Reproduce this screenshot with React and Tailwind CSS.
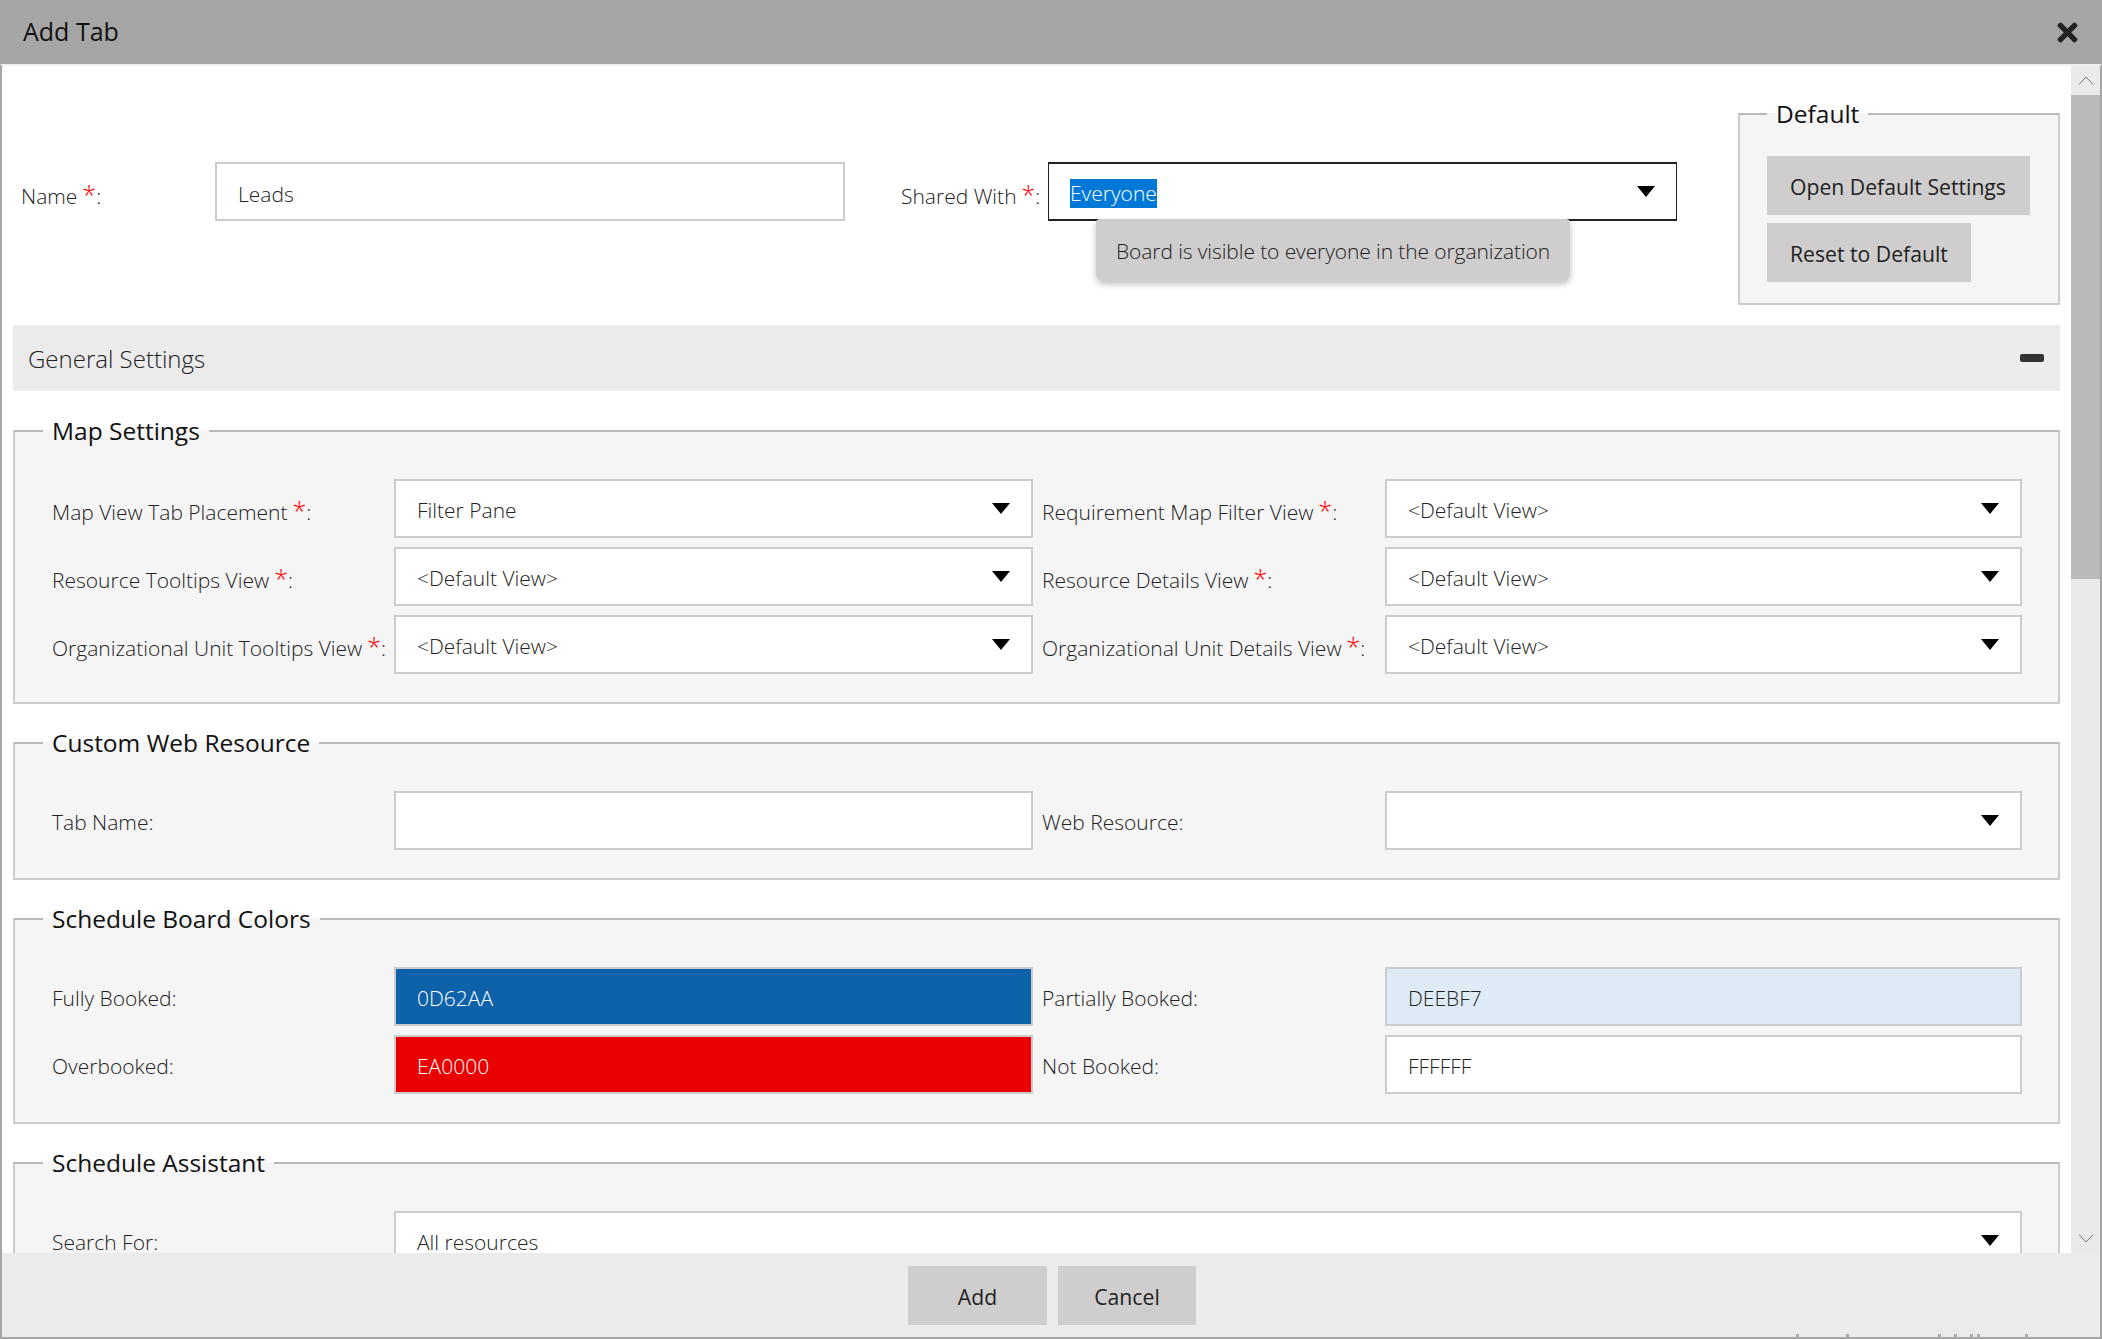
import React from "react";
import { FaTimes } from "react-icons/fa";

const font = "font-['Open_Sans',sans-serif]";

// bits of the page behind the dialog that peek out under the footer
const specks = [1796, 1846, 1938, 1954, 1970, 1977, 2025];

function Caret() {
  return (
    <svg className="absolute top-[22px] right-[21px]" width="18" height="11" viewBox="0 0 18 11">
      <path d="M0 0h18L9 11z" fill="#000" />
    </svg>
  );
}

function Field({ value, select, className = "", bg = "bg-white", textClass = "text-[#222]" }) {
  return (
    <div className={`relative flex h-[59px] items-center border-2 border-[#ccc] pt-[6px] pl-[21px] text-[21px] font-light ${bg} ${textClass} ${className}`}>
      {value}
      {select && <Caret />}
    </div>
  );
}

function Label({ text, required }) {
  return (
    <div className={`${required ? "pt-[8px]" : "pt-[3px]"} text-[21px] leading-[32px] font-light whitespace-nowrap text-[#222]`}>
      {text}
      {required && <span className="ml-[5px] text-[25px] leading-[0] text-[#f00]">*</span>}:
    </div>
  );
}

function Section({ title, className = "", children }) {
  return (
    <fieldset className={`border-2 border-[#ccc] border-t-[#b9b9b9] bg-[#f5f5f5] pb-[28.5px] pl-[37px] ${className}`}>
      <legend className="ml-[-9px] px-[9px] text-[24.5px] leading-[36px] text-[#111]">{title}</legend>
      <div className="mt-[29.5px] grid grid-cols-[342px_639px_352px_637px] items-center gap-y-[9px]">{children}</div>
    </fieldset>
  );
}

export default function App() {
  return (
    <div className={`relative flex h-[1339px] w-[2102px] flex-col overflow-hidden bg-white ${font}`}>
      <div className="flex h-[64px] shrink-0 items-center justify-between bg-[#a6a6a6] pr-[20px] pl-[23px]">
        <span className="text-[25px] text-[#111]">Add Tab</span>
        <FaTimes size={29} color="#222" />
      </div>

      <div className="flex min-h-0 flex-1 border-x-2 border-t-2 border-x-[#a6a6a6] border-t-[#f0f0f0]">
        <div className="min-w-0 flex-1 overflow-hidden px-[11px]">
          <div className="relative flex h-[259px] items-start">
            <div className="mt-[96px] flex items-center">
              <div className="w-[202px] pl-[8px]">
                <Label text="Name" required />
              </div>
              <Field value="Leads" className="w-[630px]" />
              <div className="w-[203px] pl-[56px]">
                <Label text="Shared With" required />
              </div>
              <div className="relative flex h-[59px] w-[629px] items-center border-x border-y-2 border-[#222] bg-white pt-[4px] pl-[21px] text-[21px] leading-[29px] font-light">
                <span className="bg-[#0078d7] text-white">Everyone</span>
                <Caret />
                <div className="absolute top-[55px] left-[47px] flex h-[62px] w-[474px] items-center rounded-t-sm rounded-b-lg bg-[#cfcdcd] pt-[3px] pl-[20px] tracking-[-0.1px] whitespace-nowrap text-[#222] shadow-[0_3px_6px_rgba(0,0,0,0.25)]">
                  Board is visible to everyone in the organization
                </div>
              </div>
            </div>
            <fieldset className="absolute top-[30px] right-0 h-[209px] w-[322px] border-2 border-[#ccc] border-t-[#b9b9b9] bg-[#f5f5f5] pl-[27px]">
              <legend className="px-[9px] text-[24.5px] leading-[36px] text-[#111]">Default</legend>
              <div className="mt-[24px] flex flex-col items-start gap-[8px]">
                <button className="h-[59px] w-[263px] bg-[#cfcdcd] pt-[3px] pl-[23px] text-left text-[21.2px] text-[#222]">Open Default Settings</button>
                <button className="h-[59px] w-[204px] bg-[#cfcdcd] pt-[3px] pl-[23px] text-left text-[21.2px] text-[#222]">Reset to Default</button>
              </div>
            </fieldset>
          </div>

          <div className="flex h-[66px] items-center justify-between bg-[#ebebeb] pr-[16px] pl-[15px]">
            <span className="pt-[2px] text-[24px] font-light text-[#222]">General Settings</span>
            <span className="h-[8px] w-[24px] rounded-[2px] bg-[#333]" />
          </div>

          <Section title="Map Settings" className="mt-[22px]">
            <Label text="Map View Tab Placement" required />
            <Field value="Filter Pane" select />
            <div className="pl-[9px]"><Label text="Requirement Map Filter View" required /></div>
            <Field value="<Default View>" select />
            <Label text="Resource Tooltips View" required />
            <Field value="<Default View>" select />
            <div className="pl-[9px]"><Label text="Resource Details View" required /></div>
            <Field value="<Default View>" select />
            <Label text="Organizational Unit Tooltips View" required />
            <Field value="<Default View>" select />
            <div className="pl-[9px]"><Label text="Organizational Unit Details View" required /></div>
            <Field value="<Default View>" select />
          </Section>

          <Section title="Custom Web Resource" className="mt-[21px]">
            <Label text="Tab Name" />
            <Field value="" />
            <div className="pl-[9px]"><Label text="Web Resource" /></div>
            <Field value="" select />
          </Section>

          <Section title="Schedule Board Colors" className="mt-[21px]">
            <Label text="Fully Booked" />
            <Field value="0D62AA" bg="bg-[#0d62aa]" textClass="text-white" />
            <div className="pl-[9px]"><Label text="Partially Booked" /></div>
            <Field value="DEEBF7" bg="bg-[#deebf7]" />
            <Label text="Overbooked" />
            <Field value="EA0000" bg="bg-[#ea0000]" textClass="text-white" />
            <div className="pl-[9px]"><Label text="Not Booked" /></div>
            <Field value="FFFFFF" />
          </Section>

          <Section title="Schedule Assistant" className="mt-[21px]">
            <Label text="Search For" />
            <div className="col-span-3 w-[1628px]">
              <Field value="All resources" select />
            </div>
          </Section>
        </div>

        <div className="flex w-[29px] shrink-0 flex-col bg-[#eaeaea]">
          <div className="flex h-[29px] items-center justify-center">
            <svg width="16" height="9" viewBox="0 0 16 9" fill="none" stroke="#777"><path d="M1 8.5 8 1l7 7.5" /></svg>
          </div>
          <div className="h-[484px] bg-[#b9b9b9]" />
          <div className="mt-auto flex h-[29px] items-center justify-center">
            <svg width="16" height="9" viewBox="0 0 16 9" fill="none" stroke="#777"><path d="M1 .5 8 8l7-7.5" /></svg>
          </div>
        </div>
      </div>

      <div className="flex h-[86px] shrink-0 justify-center gap-[11px] border-x-2 border-b-2 border-[#a6a6a6] bg-[#ebebeb] pt-[13px] pl-[2px]">
        <button className="h-[59px] w-[139px] bg-[#cfcdcd] pt-[2px] text-[21.2px] text-[#222]">Add</button>
        <button className="h-[59px] w-[138px] bg-[#cfcdcd] pt-[2px] text-[21.2px] text-[#222]">Cancel</button>
      </div>

      {specks.map((x) => (
        <span key={x} className="absolute bottom-[2px] h-[3px] w-[3px] bg-[#aaa]" style={{ left: x }} />
      ))}
    </div>
  );
}
